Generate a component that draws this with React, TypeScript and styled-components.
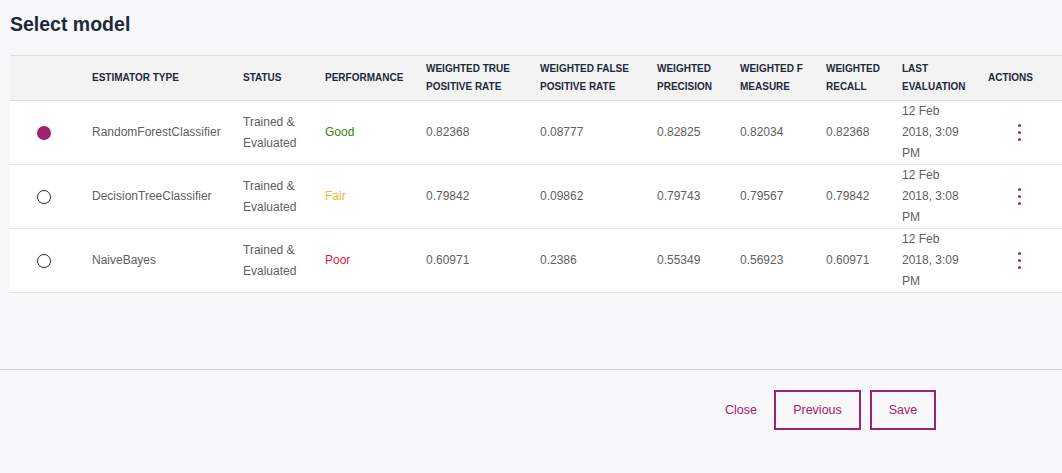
import React from "react";
import styled, { createGlobalStyle } from "styled-components";

const Global = createGlobalStyle`
  html, body { margin: 0; padding: 0; background: #f8f8fa; }
  body { font-family: "Liberation Sans", Arial, sans-serif; }
`;

const MAGENTA = "#a2216b";

const Page = styled.div`
  width: 1062px;
  height: 473px;
  display: flex;
  flex-direction: column;
  overflow: hidden;
`;

const Body = styled.div`
  padding: 12px 0 0 10px;
`;

const Title = styled.h1`
  margin: 0;
  font-size: 19.5px;
  line-height: 24px;
  font-weight: bold;
  color: #1d2a39;
`;

const Table = styled.table`
  margin-top: 19px;
  width: 1052px;
  border-collapse: collapse;
  table-layout: fixed;
`;

const HeadRow = styled.tr`
  background: #f3f3f4;
  border-top: 1px solid #dedede;
  border-bottom: 1px solid #dedede;
  height: 45px;
`;

const Th = styled.th<{ $pr?: number }>`
  text-align: left;
  vertical-align: middle;
  padding: 0 ${(p) => p.$pr ?? 10}px 0 0;
  font-size: 10px;
  line-height: 18px;
  font-weight: bold;
  color: #1f2a38;
  text-transform: uppercase;
`;

const Row = styled.tr`
  background: #ffffff;
  border-bottom: 1px solid #e2e2e2;
  height: 63px;
`;

const Td = styled.td<{ $pr?: number; $color?: string }>`
  padding: 0 ${(p) => p.$pr ?? 10}px 0 0;
  vertical-align: middle;
  font-size: 12px;
  line-height: 21px;
  color: ${(p) => p.$color ?? "#606060"};
`;

const RadioCell = styled.td`
  padding: 0 0 0 27px;
  vertical-align: middle;
`;

const Radio = styled.span<{ $on?: boolean }>`
  display: block;
  box-sizing: border-box;
  width: 14px;
  height: 14px;
  border-radius: 50%;
  background: ${(p) => (p.$on ? MAGENTA : "transparent")};
  border: ${(p) => (p.$on ? "none" : "1px solid #1f2a38")};
`;

const KebabCell = styled.td`
  padding: 0 0 0 30px;
  vertical-align: middle;
`;

const Kebab = styled.span`
  display: flex;
  flex-direction: column;
  gap: 4px;
  width: 3px;
  span {
    width: 3px;
    height: 3px;
    border-radius: 50%;
    background: ${MAGENTA};
  }
`;

const Footer = styled.div`
  margin-top: 76px;
  border-top: 1px solid #cfcfd2;
  display: flex;
  justify-content: flex-end;
  align-items: center;
  gap: 9px;
  padding: 20px 126px 0 0;
`;

const TextButton = styled.button`
  background: none;
  border: none;
  padding: 0 8px 0 0;
  font-family: inherit;
  font-size: 12.5px;
  color: ${MAGENTA};
  cursor: pointer;
`;

const OutlineButton = styled.button<{ $w: number }>`
  box-sizing: border-box;
  width: ${(p) => p.$w}px;
  height: 40px;
  background: transparent;
  border: 2px solid ${MAGENTA};
  font-family: inherit;
  font-size: 12.5px;
  color: ${MAGENTA};
  cursor: pointer;
`;

type Model = {
  name: string;
  perf: "Good" | "Fair" | "Poor";
  tpr: string;
  fpr: string;
  prec: string;
  f: string;
  recall: string;
  date: string;
  on?: boolean;
};

const perfColor = { Good: "#3e7e12", Fair: "#f1b531", Poor: "#e3173e" };

const models: Model[] = [
  { name: "RandomForestClassifier", perf: "Good", tpr: "0.82368", fpr: "0.08777", prec: "0.82825", f: "0.82034", recall: "0.82368", date: "12 Feb 2018, 3:09 PM", on: true },
  { name: "DecisionTreeClassifier", perf: "Fair", tpr: "0.79842", fpr: "0.09862", prec: "0.79743", f: "0.79567", recall: "0.79842", date: "12 Feb 2018, 3:08 PM" },
  { name: "NaiveBayes", perf: "Poor", tpr: "0.60971", fpr: "0.2386", prec: "0.55349", f: "0.56923", recall: "0.60971", date: "12 Feb 2018, 3:09 PM" },
];

const widths = [82, 151, 82, 101, 114, 117, 83, 86, 76, 86, 74];

export default function App() {
  return (
    <Page>
      <Global />
      <Body>
        <Title>Select model</Title>
        <Table>
          <colgroup>
            {widths.map((w, i) => (
              <col key={i} style={{ width: w }} />
            ))}
          </colgroup>
          <thead>
            <HeadRow>
              <Th />
              <Th>Estimator type</Th>
              <Th>Status</Th>
              <Th>Performance</Th>
              <Th>Weighted true positive rate</Th>
              <Th>Weighted false positive rate</Th>
              <Th>Weighted precision</Th>
              <Th>Weighted F measure</Th>
              <Th>Weighted recall</Th>
              <Th $pr={16}>Last evaluation</Th>
              <Th>Actions</Th>
            </HeadRow>
          </thead>
          <tbody>
            {models.map((m) => (
              <Row key={m.name}>
                <RadioCell>
                  <Radio $on={m.on} />
                </RadioCell>
                <Td>{m.name}</Td>
                <Td>Trained &amp; Evaluated</Td>
                <Td $color={perfColor[m.perf]}>{m.perf}</Td>
                <Td>{m.tpr}</Td>
                <Td>{m.fpr}</Td>
                <Td>{m.prec}</Td>
                <Td>{m.f}</Td>
                <Td>{m.recall}</Td>
                <Td $pr={18}>{m.date}</Td>
                <KebabCell>
                  <Kebab>
                    <span />
                    <span />
                    <span />
                  </Kebab>
                </KebabCell>
              </Row>
            ))}
          </tbody>
        </Table>
      </Body>
      <Footer>
        <TextButton>Close</TextButton>
        <OutlineButton $w={87}>Previous</OutlineButton>
        <OutlineButton $w={66}>Save</OutlineButton>
      </Footer>
    </Page>
  );
}
